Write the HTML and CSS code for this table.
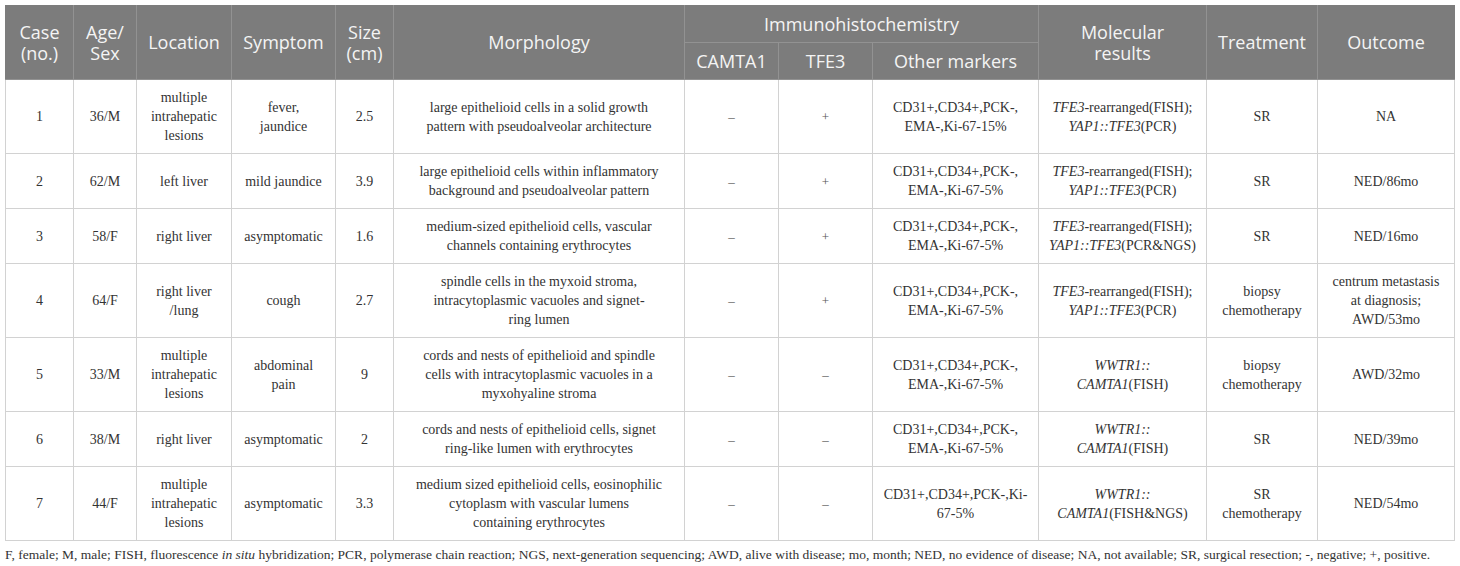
FILE: index.html
```html
<!DOCTYPE html>
<html lang="en">
<head>
<meta charset="utf-8">
<title>Table</title>
<link rel="stylesheet" href="styles.css">
</head>
<body>
<div class="wrap">
<table class="cases">
  <colgroup>
    <col class="c-case"><col class="c-age"><col class="c-loc"><col class="c-sym"><col class="c-size"><col class="c-morph"><col class="c-camta"><col class="c-tfe"><col class="c-other"><col class="c-mol"><col class="c-treat"><col class="c-out">
  </colgroup>
  <thead>
    <tr class="h1">
      <th rowspan="2">Case<br>(no.)</th>
      <th rowspan="2">Age/<br>Sex</th>
      <th rowspan="2">Location</th>
      <th rowspan="2">Symptom</th>
      <th rowspan="2">Size<br>(cm)</th>
      <th rowspan="2">Morphology</th>
      <th colspan="3">Immunohistochemistry</th>
      <th rowspan="2">Molecular<br>results</th>
      <th rowspan="2">Treatment</th>
      <th rowspan="2">Outcome</th>
    </tr>
    <tr class="h2">
      <th>CAMTA1</th>
      <th>TFE3</th>
      <th>Other markers</th>
    </tr>
  </thead>
  <tbody>
    <tr>
      <td>1</td><td>36/M</td><td>multiple<br>intrahepatic<br>lesions</td><td>fever,<br>jaundice</td><td>2.5</td>
      <td>large epithelioid cells in a solid growth<br>pattern with pseudoalveolar architecture</td>
      <td class="sign">–</td><td class="sign">+</td>
      <td>CD31+,CD34+,PCK-,<br>EMA-,Ki-67-15%</td>
      <td><i>TFE3</i>-rearranged(FISH);<br><i>YAP1::TFE3</i>(PCR)</td>
      <td>SR</td><td>NA</td>
    </tr>
    <tr>
      <td>2</td><td>62/M</td><td>left liver</td><td>mild jaundice</td><td>3.9</td>
      <td>large epithelioid cells within inflammatory<br>background and pseudoalveolar pattern</td>
      <td class="sign">–</td><td class="sign">+</td>
      <td>CD31+,CD34+,PCK-,<br>EMA-,Ki-67-5%</td>
      <td><i>TFE3</i>-rearranged(FISH);<br><i>YAP1::TFE3</i>(PCR)</td>
      <td>SR</td><td>NED/86mo</td>
    </tr>
    <tr>
      <td>3</td><td>58/F</td><td>right liver</td><td>asymptomatic</td><td>1.6</td>
      <td>medium-sized epithelioid cells, vascular<br>channels containing erythrocytes</td>
      <td class="sign">–</td><td class="sign">+</td>
      <td>CD31+,CD34+,PCK-,<br>EMA-,Ki-67-5%</td>
      <td><i>TFE3</i>-rearranged(FISH);<br><i>YAP1::TFE3</i>(PCR&amp;NGS)</td>
      <td>SR</td><td>NED/16mo</td>
    </tr>
    <tr>
      <td>4</td><td>64/F</td><td>right liver<br>/lung</td><td>cough</td><td>2.7</td>
      <td>spindle cells in the myxoid stroma,<br>intracytoplasmic vacuoles and signet-<br>ring lumen</td>
      <td class="sign">–</td><td class="sign">+</td>
      <td>CD31+,CD34+,PCK-,<br>EMA-,Ki-67-5%</td>
      <td><i>TFE3</i>-rearranged(FISH);<br><i>YAP1::TFE3</i>(PCR)</td>
      <td>biopsy<br>chemotherapy</td><td>centrum metastasis<br>at diagnosis;<br>AWD/53mo</td>
    </tr>
    <tr>
      <td>5</td><td>33/M</td><td>multiple<br>intrahepatic<br>lesions</td><td>abdominal<br>pain</td><td>9</td>
      <td>cords and nests of epithelioid and spindle<br>cells with intracytoplasmic vacuoles in a<br>myxohyaline stroma</td>
      <td class="sign">–</td><td class="sign">–</td>
      <td>CD31+,CD34+,PCK-,<br>EMA-,Ki-67-5%</td>
      <td><i>WWTR1::</i><br><i>CAMTA1</i>(FISH)</td>
      <td>biopsy<br>chemotherapy</td><td>AWD/32mo</td>
    </tr>
    <tr>
      <td>6</td><td>38/M</td><td>right liver</td><td>asymptomatic</td><td>2</td>
      <td>cords and nests of epithelioid cells, signet<br>ring-like lumen with erythrocytes</td>
      <td class="sign">–</td><td class="sign">–</td>
      <td>CD31+,CD34+,PCK-,<br>EMA-,Ki-67-5%</td>
      <td><i>WWTR1::</i><br><i>CAMTA1</i>(FISH)</td>
      <td>SR</td><td>NED/39mo</td>
    </tr>
    <tr>
      <td>7</td><td>44/F</td><td>multiple<br>intrahepatic<br>lesions</td><td>asymptomatic</td><td>3.3</td>
      <td>medium sized epithelioid cells, eosinophilic<br>cytoplasm with vascular lumens<br>containing erythrocytes</td>
      <td class="sign">–</td><td class="sign">–</td>
      <td>CD31+,CD34+,PCK-,Ki-<br>67-5%</td>
      <td><i>WWTR1::</i><br><i>CAMTA1</i>(FISH&amp;NGS)</td>
      <td>SR<br>chemotherapy</td><td>NED/54mo</td>
    </tr>
  </tbody>
</table>
<p class="note">F, female; M, male; FISH, fluorescence <i>in situ</i> hybridization; PCR, polymerase chain reaction; NGS, next-generation sequencing; AWD, alive with disease; mo, month; NED, no evidence of disease; NA, not available; SR, surgical resection; -, negative; +, positive.</p>
</div>
</body>
</html>
```

FILE: styles.css
```css
html, body {
  margin: 0;
  padding: 0;
  background: #ffffff;
}

.wrap {
  padding: 5px 0 0 5px;
}

.cases {
  border-collapse: collapse;
  table-layout: fixed;
  width: 1450px;
  font-family: "Liberation Serif", "Times New Roman", serif;
  font-size: 14px;
  line-height: 19px;
  color: #333333;
}

.c-case { width: 68px; }
.c-age { width: 63px; }
.c-loc { width: 95px; }
.c-sym { width: 104px; }
.c-size { width: 58px; }
.c-morph { width: 291px; }
.c-camta { width: 94px; }
.c-tfe { width: 94px; }
.c-other { width: 166px; }
.c-mol { width: 168px; }
.c-treat { width: 111px; }
.c-out { width: 137px; }

.cases th {
  background: #7c7c7c;
  color: #f4f4f4;
  font-family: "Open Sans", "Liberation Sans", sans-serif;
  font-weight: normal;
  font-size: 18px;
  line-height: 21px;
  text-align: center;
  vertical-align: middle;
  padding: 0 4px;
  border: 1px solid #929292;
  border-top-color: #7c7c7c;
}

.cases thead tr:first-child th:first-child {
  border-left-color: #7c7c7c;
}

.cases thead tr:first-child th:last-child {
  border-right-color: #7c7c7c;
}

.h1 th,
.h2 th {
  height: 36px;
}

.cases td {
  border: 1px solid #d2d2d2;
  padding: 8px 4px;
  text-align: center;
  vertical-align: middle;
}

.cases td.sign {
  color: #555555;
  font-size: 13px;
}

.note {
  margin: 5px 0 0 0;
  font-family: "Liberation Serif", "Times New Roman", serif;
  font-size: 13.5px;
  line-height: 18px;
  color: #333333;
}
```
